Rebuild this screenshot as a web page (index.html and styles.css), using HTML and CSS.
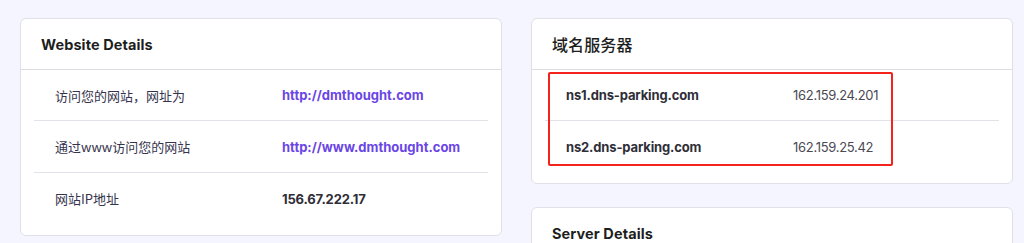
FILE: index.html
```html
<!DOCTYPE html>
<html lang="zh">
<head>
<meta charset="utf-8">
<link rel="stylesheet" href="styles.css">
</head>
<body>
<div class="page">
  <section class="card">
    <div class="card-head"><h2 class="title">Website Details</h2></div>
    <div class="card-body">
      <div class="row"><span class="label">访问您的网站，网址为</span><a class="link">http://dmthought.com</a></div>
      <div class="row"><span class="label">通过www访问您的网站</span><a class="link">http://www.dmthought.com</a></div>
      <div class="row"><span class="label">网站IP地址</span><span class="strong">156.67.222.17</span></div>
    </div>
  </section>
  <div class="col">
    <section class="card ns-card">
      <div class="card-head"><h2 class="title cjk">域名服务器</h2></div>
      <div class="card-body">
        <div class="row"><span class="strong">ns1.dns-parking.com</span><span class="ip">162.159.24.201</span></div>
        <div class="row"><span class="strong">ns2.dns-parking.com</span><span class="ip">162.159.25.42</span></div>
      </div>
      <div class="mark"></div>
    </section>
    <section class="card">
      <div class="card-head"><h2 class="title">Server Details</h2></div>
    </section>
  </div>
</div>
</body>
</html>
```
FILE: styles.css
```css
html, body {
  margin: 0;
  padding: 0;
  background: #f4f5fe;
  font-family: "Inter", "Noto Sans CJK SC", sans-serif;
  color: #36344d;
  overflow: hidden;
}
.page {
  display: grid;
  grid-template-columns: 482px 482px;
  column-gap: 29px;
  padding: 18px 0 0 20px;
  align-items: start;
}
.col {
  display: flex;
  flex-direction: column;
  gap: 23px;
}
.card {
  background: #fff;
  border: 1px solid #e0e0e6;
  border-radius: 6px;
  position: relative;
}
.card-head {
  height: 50px;
  border-bottom: 1px solid #dcdce2;
  display: flex;
  align-items: center;
  padding-left: 20px;
}
.title {
  margin: 0;
  font-size: 14.5px;
  font-weight: 700;
  color: #1d1e20;
  letter-spacing: 0.1px;
}
.title.cjk {
  font-family: "Noto Sans CJK SC", sans-serif;
  font-size: 16px;
  font-weight: 500;
}
.card-body {
  padding: 0 13px 11px 13px;
}
.row {
  display: grid;
  grid-template-columns: 227px 1fr;
  padding-left: 21px;
  height: 51px;
  align-items: center;
  border-top: 1px solid #e2e2e8;
  font-size: 13px;
}
.row:first-child {
  border-top: none;
  height: 50px;
}
.label {
  font-family: "Noto Sans CJK SC", sans-serif;
  color: #36344d;
  font-size: 13px;
}
.link {
  color: #6a45e6;
  font-weight: 700;
}
.strong {
  font-weight: 700;
  color: #2f2e38;
  letter-spacing: -0.15px;
}
.ip {
  color: #4a4a55;
  letter-spacing: -0.3px;
}
.mark {
  position: absolute;
  left: 16px;
  top: 53px;
  width: 341px;
  height: 90px;
  border: 2px solid #f3221d;
  border-radius: 2px;
}
```
